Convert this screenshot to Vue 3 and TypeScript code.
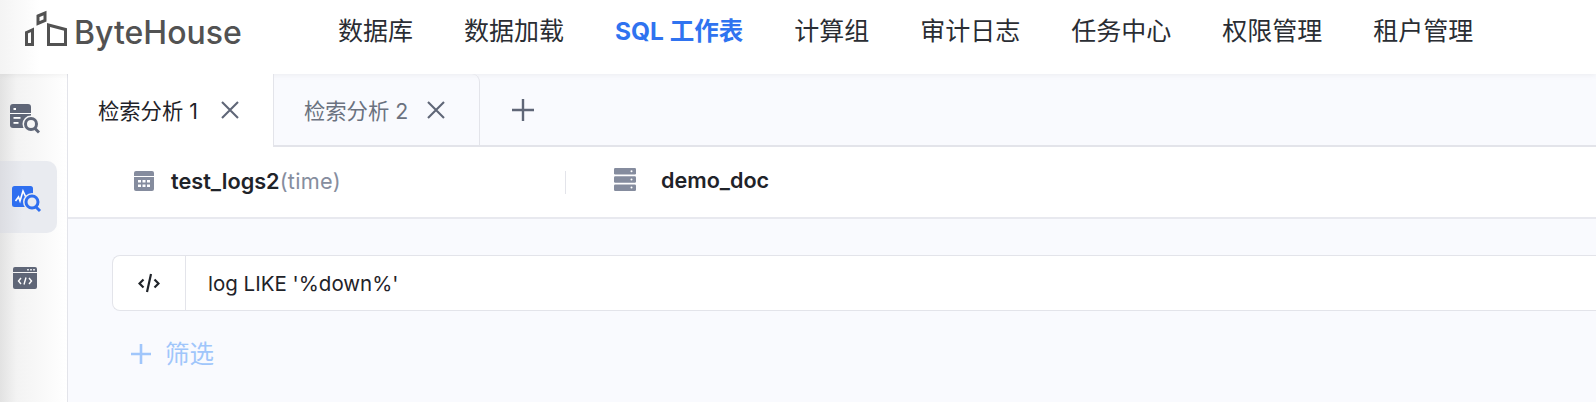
<script setup lang="ts">
const nav: { label: string; active?: boolean }[] = [
  { label: '数据库' },
  { label: '数据加载' },
  { label: 'SQL 工作表', active: true },
  { label: '计算组' },
  { label: '审计日志' },
  { label: '任务中心' },
  { label: '权限管理' },
  { label: '租户管理' },
]
</script>

<template>
  <div class="page">
    <header class="header">
      <div class="logo">
        <svg class="logo-mark" width="42" height="36" viewBox="0 0 42 36" fill="none" stroke="#525252" stroke-width="3">
          <path d="M1.5 22.5 7.5 19.8V34.5H1.5Z" />
          <path d="M13 6 20 3V10.5L13 13.5Z" />
          <path d="M23.5 15 40.5 19.5V34.5H23.5Z" />
        </svg>
        <span class="logo-text">ByteHouse</span>
      </div>
      <nav class="nav">
        <a v-for="item in nav" :key="item.label" class="nav-item" :class="{ active: item.active }">{{ item.label }}</a>
      </nav>
    </header>
    <div class="body">
      <aside class="side">
        <div class="side-btn first">
          <svg width="30" height="30" viewBox="0 0 30 30">
            <rect x="0" y="0" width="21" height="24" rx="3" fill="#5f6677" />
            <rect x="3.5" y="4" width="2.5" height="2" fill="#fff" />
            <rect x="0" y="9" width="21" height="1" fill="#fff" />
            <rect x="3.5" y="13" width="7" height="1.8" fill="#fff" />
            <rect x="3.5" y="18" width="5" height="1.8" fill="#fff" />
            <circle cx="21" cy="20" r="8.5" fill="#f6f6f6" />
            <circle cx="21" cy="20" r="5.5" fill="none" stroke="#5f6677" stroke-width="3" />
            <path d="M25 24.5 29 28.5" stroke="#5f6677" stroke-width="3" />
          </svg>
        </div>
        <div class="side-btn selected">
          <svg width="30" height="28" viewBox="0 0 30 28">
            <rect x="0" y="0" width="21" height="21" rx="2.5" fill="#2f6ff0" />
            <path d="M3.5 15 6.5 11 8 15 11 5 14 11.5 17 9" fill="none" stroke="#fff" stroke-width="1.6" />
            <circle cx="20" cy="16" r="9" fill="#e9ebf0" />
            <circle cx="20" cy="16" r="6" fill="none" stroke="#2f6ff0" stroke-width="3" />
            <path d="M24 21 28 25" stroke="#2f6ff0" stroke-width="3" />
          </svg>
        </div>
        <div class="side-btn code">
          <svg width="24" height="22" viewBox="0 0 24 22">
            <path d="M2 0H22A2 2 0 0 1 24 2V5H0V2A2 2 0 0 1 2 0Z" fill="#5f6677" />
            <path d="M0 6H24V20A2 2 0 0 1 22 22H2A2 2 0 0 1 0 20Z" fill="#5f6677" />
            <rect x="14" y="2" width="2" height="1.5" fill="#d8dae0" />
            <rect x="17" y="2" width="2" height="1.5" fill="#d8dae0" />
            <rect x="20" y="2" width="2" height="1.5" fill="#d8dae0" />
            <path d="M8 11 5.5 14 8 17M16 11 18.5 14 16 17M13 10.5 11 17.5" fill="none" stroke="#fff" stroke-width="1.4" />
          </svg>
        </div>
      </aside>
      <main class="main">
        <div class="tabs">
          <div class="tab current">
            <span>检索分析 1</span>
            <svg class="x" width="20" height="20" viewBox="0 0 20 20"><path d="M2 2 18 18M18 2 2 18" stroke="#5f6677" stroke-width="2.1" /></svg>
          </div>
          <div class="tab other">
            <span>检索分析 2</span>
            <svg class="x" width="20" height="20" viewBox="0 0 20 20"><path d="M2 2 18 18M18 2 2 18" stroke="#5f6677" stroke-width="2.1" /></svg>
          </div>
          <div class="add">
            <svg width="24" height="24" viewBox="0 0 24 24"><path d="M12 1V23M1 12H23" stroke="#5f6677" stroke-width="2.4" /></svg>
          </div>
        </div>
        <div class="source">
          <div class="source-left">
            <svg width="20" height="20" viewBox="0 0 20 20">
              <path d="M2 0H18A2 2 0 0 1 20 2V5H0V2A2 2 0 0 1 2 0Z" fill="#858c9e" />
              <path d="M0 6H20V18A2 2 0 0 1 18 20H2A2 2 0 0 1 0 18Z" fill="#858c9e" />
              <g fill="#fff"><rect x="4" y="9" width="3" height="2.5" /><rect x="8.5" y="9" width="3" height="2.5" /><rect x="13" y="9" width="3" height="2.5" /><rect x="4" y="13.5" width="3" height="2.5" /><rect x="8.5" y="13.5" width="3" height="2.5" /><rect x="13" y="13.5" width="3" height="2.5" /></g>
            </svg>
            <span class="source-name">test_logs2</span><span class="source-sub">(time)</span>
          </div>
          <div class="source-right">
            <svg width="22" height="23" viewBox="0 0 22 23">
              <g fill="#858c9e"><rect width="22" height="6.5" rx="1.2" /><rect y="8.2" width="22" height="6.5" rx="1.2" /><rect y="16.4" width="22" height="6.5" rx="1.2" /></g>
              <g fill="#fff"><circle cx="17.5" cy="3.2" r="1" /><circle cx="17.5" cy="11.4" r="1" /><circle cx="17.5" cy="19.6" r="1" /></g>
            </svg>
            <span class="source-name db">demo_doc</span>
          </div>
        </div>
        <div class="content">
          <div class="filter">
            <div class="filter-icon">
              <svg width="22" height="22" viewBox="0 0 22 22" fill="none" stroke="#1f2329" stroke-width="2.2">
                <path d="M5.5 7.5 1.5 11.5 5.5 15.5M16.5 7.5 20.5 11.5 16.5 15.5M13 2 9 20" />
              </svg>
            </div>
            <div class="filter-text">log LIKE '%down%'</div>
          </div>
          <div class="add-filter">
            <svg width="22" height="22" viewBox="0 0 22 22"><path d="M11 1V21M1 11H21" stroke="#a0c6fb" stroke-width="2.6" /></svg>
            <span>筛选</span>
          </div>
        </div>
      </main>
    </div>
  </div>
</template>

<style>
html, body { margin: 0; background: #fff; overflow: hidden; }
</style>

<style scoped>
.page {
  width: 1596px;
  height: 402px;
  display: flex;
  flex-direction: column;
  overflow: hidden;
  font-family: Inter, "Noto Sans CJK SC", sans-serif;
  color: #1f2329;
}
.header {
  height: 74px;
  flex: none;
  display: flex;
  align-items: flex-start;
  background: linear-gradient(90deg, #f4f4f4 0, #fff 40px);
  position: relative;
  z-index: 1;
  box-shadow: 0 1px 6px rgba(0, 0, 0, 0.06);
}
.logo {
  width: 338px;
  padding: 10px 0 0 25px;
  box-sizing: border-box;
  display: flex;
  align-items: flex-end;
  gap: 7px;
  flex: none;
}
.logo-mark { flex: none; }
.logo-text {
  font-size: 32px;
  font-weight: 500;
  color: #525252;
  line-height: 36px;
  margin-bottom: -5px;
}
.nav {
  display: flex;
  gap: 51px;
  padding-top: 14px;
}
.nav-item {
  font-size: 25px;
  line-height: 34px;
  color: #2a2d33;
  white-space: nowrap;
}
.nav-item.active {
  color: #2f73f0;
  font-size: 24.5px;
  font-weight: 700;
}
.body {
  flex: 1;
  display: flex;
  min-height: 0;
}
.side {
  width: 67px;
  flex: none;
  border-right: 1px solid #e3e4ea;
  background: linear-gradient(90deg, #e2e2e2 0, #f3f3f3 25%, #fff 100%);
  padding-top: 8px;
  display: flex;
  flex-direction: column;
  gap: 7px;
}
.side-btn {
  width: 57px;
  height: 72px;
  display: flex;
  align-items: center;
  box-sizing: border-box;
  padding-left: 10px;
  border-radius: 0 10px 10px 0;
}
.side-btn.first {
  padding-top: 2px;
}
.side-btn.selected {
  background: linear-gradient(90deg, #dcdde2 0, #e9ebf0 40%);
  padding: 6px 0 0 12px;
}
.side-btn.code {
  padding: 4px 0 0 13px;
}
.main {
  flex: 1;
  min-width: 0;
  display: flex;
  flex-direction: column;
  background: #f9fafe;
}
.tabs {
  height: 73px;
  flex: none;
  display: flex;
  box-sizing: border-box;
  border-bottom: 2px solid #e3e4ea;
}
.tab {
  height: 73px;
  box-sizing: border-box;
  display: flex;
  align-items: center;
  font-size: 21.3px;
  padding-bottom: 2px;
}
.tab.current {
  width: 206px;
  background: #fff;
  border-right: 1px solid #e3e4ea;
  padding-left: 30px;
  gap: 22px;
  color: #1f2329;
  position: relative;
  z-index: 1;
}
.tab.other {
  width: 206px;
  height: 71px;
  background: #f9fafe;
  border-right: 1px solid #e3e4ea;
  border-top-right-radius: 8px;
  padding-left: 30px;
  padding-bottom: 0;
  gap: 18px;
  color: #6b7280;
}
.x { flex: none; }
.add {
  width: 86px;
  display: flex;
  align-items: center;
  justify-content: center;
}
.source {
  height: 72px;
  flex: none;
  display: flex;
  align-items: center;
  background: #fff;
  border-bottom: 2px solid #e8e9ef;
  box-sizing: border-box;
  font-size: 21.7px;
}
.source-left {
  width: 498px;
  box-sizing: border-box;
  padding-left: 66px;
  display: flex;
  align-items: center;
  border-right: 1px solid #e3e4ea;
  height: 23px;
}
.source-left svg { margin-right: 17px; margin-top: -2px; flex: none; }
.source-name { font-weight: 600; color: #1f2329; margin-top: -3px; }
.source-sub { color: #868d9e; letter-spacing: 0.3px; margin-top: -3px; }
.source-right {
  padding-left: 48px;
  display: flex;
  align-items: center;
  margin-top: -2px;
  font-size: 21.6px;
}
.source-right svg { margin-right: 25px; margin-top: -4px; flex: none; }
.content {
  flex: 1;
  padding: 36px 0 0 44px;
}
.filter {
  height: 56px;
  display: flex;
  align-items: stretch;
  background: #fff;
  border: 1px solid #e3e4ea;
  border-right: none;
  border-radius: 8px 0 0 8px;
  box-sizing: border-box;
}
.filter-icon {
  width: 73px;
  flex: none;
  box-sizing: border-box;
  border-right: 1px solid #e3e4ea;
  display: flex;
  align-items: center;
  justify-content: center;
}
.filter-text {
  padding-left: 22px;
  display: flex;
  align-items: center;
  font-size: 20.5px;
  color: #1f2329;
}
.add-filter {
  margin: 26px 0 0 18px;
  display: flex;
  align-items: center;
  gap: 13px;
  font-size: 24.5px;
  color: #a0c6fb;
  line-height: 34px;
}
</style>
